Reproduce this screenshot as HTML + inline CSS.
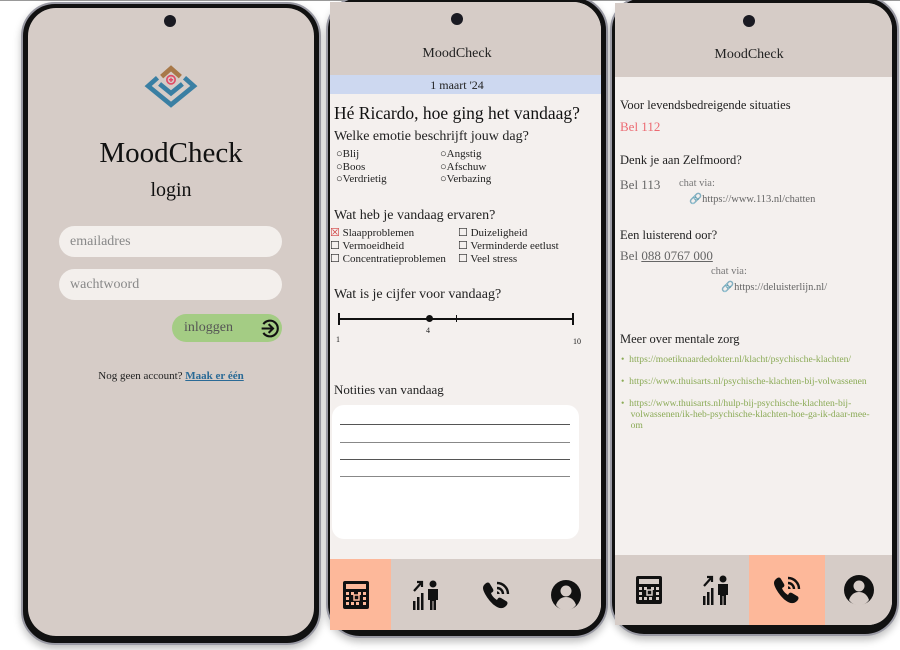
<!DOCTYPE html>
<html><head><meta charset="utf-8"><style>
*{margin:0;padding:0;box-sizing:border-box}
body{width:900px;height:650px;background:#fff;position:relative;overflow:hidden;font-family:"Liberation Serif",serif;color:#222}
.a{position:absolute}
.phone{position:absolute;background:#111;border:2px solid #9a9aa4;box-shadow:0 4px 8px rgba(0,0,0,.25)}
.scr{position:absolute;overflow:hidden}
.cam{position:absolute;width:12px;height:12px;border-radius:50%;background:#1a1a22}
.t{position:absolute;white-space:nowrap}
.nav{position:absolute;left:0;right:0;background:#d6ccc7;display:flex}
.nav div{flex:1;display:flex;align-items:center;justify-content:center}
.nav .on{background:#fdb89a}
.green{color:#8aaa55}
</style></head><body>
<div class="a" style="left:0;top:0;width:900px;height:1px;background:#999"></div>

<!-- Phone 1 -->
<div class="phone" style="left:21px;top:2px;width:300px;height:643px;border-radius:34px"></div>
<div class="scr" style="left:28px;top:8px;width:286px;height:628px;border-radius:28px;background:#d6ccc7">
  <div class="cam" style="left:136px;top:7px"></div>
  <svg class="a" style="left:116px;top:56px" width="54" height="44" viewBox="0 0 52 42">
    <path d="M17 12 L26 4 L35 12" fill="none" stroke="#a87848" stroke-width="4.5"/>
    <path d="M13 13 L4 21 L26 39 L48 21 L39 13" fill="none" stroke="#3a7fa3" stroke-width="4.5"/>
    <path d="M15 19 L26 28 L37 19" fill="none" stroke="#3a7fa3" stroke-width="4.5"/>
    <circle cx="26" cy="15" r="4" fill="none" stroke="#e04b66" stroke-width="1.6"/>
    <path d="M24 15h4M26 13v4" stroke="#e04b66" stroke-width="1.4"/>
  </svg>
  <div class="t" style="left:0;width:286px;text-align:center;top:129px;font-size:29px;color:#111">MoodCheck</div>
  <div class="t" style="left:0;width:286px;text-align:center;top:171px;font-size:20px;color:#111">login</div>
  <div class="a" style="left:31px;top:218px;width:223px;height:31px;border-radius:16px;background:#f3efec"></div>
  <div class="t" style="left:42px;top:226px;font-size:14px;color:#888">emailadres</div>
  <div class="a" style="left:31px;top:261px;width:223px;height:31px;border-radius:16px;background:#f3efec"></div>
  <div class="t" style="left:42px;top:269px;font-size:14px;color:#888">wachtwoord</div>
  <div class="a" style="left:144px;top:306px;width:110px;height:28px;border-radius:14px;background:#a4cc84"></div>
  <div class="t" style="left:156px;top:312px;font-size:14px;color:#555">inloggen</div>
  <svg class="a" style="left:231px;top:310px" width="21" height="21" viewBox="0 0 24 24"><path d="M5 7A9 9 0 1 1 5 17" fill="none" stroke="#111" stroke-width="2.4"/><path d="M3 12h12M11 7l5 5-5 5" fill="none" stroke="#111" stroke-width="2.4"/></svg>
  <div class="t" style="left:0;width:286px;text-align:center;top:362px;font-size:11px;color:#222">Nog geen account? <span style="color:#2a6a96;text-decoration:underline;font-weight:bold">Maak er één</span></div>
</div>

<!-- Phone 2 -->
<div class="phone" style="left:326px;top:-4px;width:282px;height:642px;border-radius:34px"></div>
<div class="scr" style="left:330px;top:2px;width:271px;height:628px;border-radius:0 28px 26px 0;background:#f4f0ee">
  <div class="a" style="left:0;top:0;width:271px;height:73px;background:#d6ccc7"></div>
  <div class="cam" style="left:121px;top:11px"></div>
  <div class="t" style="left:0;width:254px;text-align:center;top:44px;font-size:14px;color:#222">MoodCheck</div>
  <div class="a" style="left:0;top:73px;width:271px;height:19px;background:#cdd8f0"></div>
  <div class="t" style="left:0;width:254px;text-align:center;top:76px;font-size:12px">1 maart '24</div>
  <div class="t" style="left:4px;top:101px;font-size:17.5px;color:#111">Hé Ricardo, hoe ging het vandaag?</div>
  <div class="t" style="left:4px;top:127px;font-size:14px">Welke emotie beschrijft jouw dag?</div>
  <div class="t" style="left:6px;top:146px;font-size:11px;line-height:12.5px">○Blij<br>○Boos<br>○Verdrietig</div>
  <div class="t" style="left:110px;top:146px;font-size:11px;line-height:12.5px">○Angstig<br>○Afschuw<br>○Verbazing</div>
  <div class="t" style="left:4px;top:206px;font-size:14px">Wat heb je vandaag ervaren?</div>
  <div class="t" style="left:0;top:225px;font-size:11px;line-height:13px"><span style="color:#d04040">☒</span> Slaapproblemen<br>☐ Vermoeidheid<br>☐ Concentratieproblemen</div>
  <div class="t" style="left:128px;top:225px;font-size:11px;line-height:13px">☐ Duizeligheid<br>☐ Verminderde eetlust<br>☐ Veel stress</div>
  <div class="t" style="left:4px;top:285px;font-size:14px">Wat is je cijfer voor vandaag?</div>
  <div class="a" style="left:8px;top:316px;width:236px;height:1.5px;background:#111"></div>
  <div class="a" style="left:8px;top:311px;width:2px;height:12px;background:#111"></div>
  <div class="a" style="left:242px;top:311px;width:2px;height:12px;background:#111"></div>
  <div class="a" style="left:126px;top:313px;width:1px;height:7px;background:#111"></div>
  <div class="a" style="left:96px;top:313px;width:7px;height:7px;border-radius:50%;background:#111"></div>
  <div class="t" style="left:6px;top:333px;font-size:8px">1</div>
  <div class="t" style="left:96px;top:324px;font-size:8px">4</div>
  <div class="t" style="left:243px;top:335px;font-size:8px">10</div>
  <div class="t" style="left:4px;top:380px;font-size:13px">Notities van vandaag</div>
  <div class="a" style="left:2px;top:403px;width:247px;height:134px;border-radius:12px;background:#fff"></div>
  <div class="a" style="left:10px;top:422px;width:230px;height:1px;background:#555"></div>
  <div class="a" style="left:10px;top:440px;width:230px;height:1px;background:#888"></div>
  <div class="a" style="left:10px;top:457px;width:230px;height:1px;background:#555"></div>
  <div class="a" style="left:10px;top:474px;width:230px;height:1px;background:#888"></div>
  <div class="nav" style="top:557px;height:71px">
    <div class="on" style="flex:0 0 61px;padding-right:10px">CAL</div><div>STAT</div><div>TEL</div><div>USR</div>
  </div>
</div>

<!-- Phone 3 -->
<div class="phone" style="left:610px;top:-4px;width:289px;height:640px;border-radius:34px"></div>
<div class="scr" style="left:615px;top:3px;width:277px;height:622px;border-radius:0 26px 24px 0;background:#f4f0ee">
  <div class="a" style="left:0;top:0;width:277px;height:74px;background:#d6ccc7"></div>
  <div class="cam" style="left:128px;top:12px"></div>
  <div class="t" style="left:0;width:268px;text-align:center;top:44px;font-size:14px">MoodCheck</div>
  <div class="t" style="left:5px;top:95px;font-size:12.5px">Voor levendsbedreigende situaties</div>
  <div class="t" style="left:5px;top:116px;font-size:13px;color:#ec6b73">Bel 112</div>
  <div class="t" style="left:5px;top:150px;font-size:12.5px">Denk je aan Zelfmoord?</div>
  <div class="t" style="left:5px;top:174px;font-size:13px;color:#666">Bel 113</div>
  <div class="t" style="left:64px;top:175px;font-size:10.5px;color:#777">chat via:</div>
  <div class="t" style="left:74px;top:189px;font-size:10.5px;color:#666">🔗https://www.113.nl/chatten</div>
  <div class="t" style="left:5px;top:225px;font-size:12.5px">Een luisterend oor?</div>
  <div class="t" style="left:5px;top:245px;font-size:13px;color:#666">Bel <u>088 0767 000</u></div>
  <div class="t" style="left:96px;top:263px;font-size:10.5px;color:#777">chat via:</div>
  <div class="t" style="left:106px;top:277px;font-size:10.5px;color:#666">🔗https://deluisterlijn.nl/</div>
  <div class="t" style="left:5px;top:329px;font-size:12.5px">Meer over mentale zorg</div>
  <div class="t green" style="left:6px;top:351px;font-size:9.6px">•&nbsp;&nbsp;https://moetiknaardedokter.nl/klacht/psychische-klachten/</div>
  <div class="t green" style="left:6px;top:373px;font-size:9.6px">•&nbsp;&nbsp;https://www.thuisarts.nl/psychische-klachten-bij-volwassenen</div>
  <div class="t green" style="left:6px;top:395px;font-size:9.6px;line-height:11px">•&nbsp;&nbsp;https://www.thuisarts.nl/hulp-bij-psychische-klachten-bij-<br>&nbsp;&nbsp;&nbsp;&nbsp;volwassenen/ik-heb-psychische-klachten-hoe-ga-ik-daar-mee-<br>&nbsp;&nbsp;&nbsp;&nbsp;om</div>
  <div class="nav" style="top:552px;height:70px">
    <div>CAL</div><div>STAT</div><div class="on" style="flex:0 0 76px">TEL</div><div>USR</div>
  </div>
</div>

<script>
const icons={
CAL:'<svg width="26" height="28" viewBox="0 0 26 28"><rect x="0" y="0" width="26" height="28" rx="2" fill="#111"/><rect x="3" y="3" width="20" height="5" fill="#d6ccc7"/><g fill="#d6ccc7"><rect x="3" y="11" width="3" height="3"/><rect x="8" y="11" width="3" height="3"/><rect x="15" y="11" width="3" height="3"/><rect x="20" y="11" width="3" height="3"/><rect x="3" y="16" width="3" height="3"/><rect x="20" y="16" width="3" height="3"/><rect x="3" y="21" width="3" height="3"/><rect x="8" y="21" width="3" height="3"/><rect x="13" y="21" width="3" height="3"/><rect x="20" y="21" width="3" height="3"/><rect x="11" y="14" width="5" height="5" fill="none" stroke="#d6ccc7" stroke-width="1.5"/></g></svg>',
STAT:'<svg width="28" height="32" viewBox="0 0 28 32"><path d="M2 12L10 3M5 3h5v5" fill="none" stroke="#111" stroke-width="2.2"/><g fill="#111"><rect x="1" y="22" width="2.5" height="9"/><rect x="5" y="18" width="2.5" height="13"/><rect x="9" y="14" width="2.5" height="17"/><circle cx="21" cy="5" r="3.5"/><path d="M16 10h10v11h-2v10h-2.5v-9h-1v9H18V21h-2z"/></g></svg>',
TEL:'<svg width="30" height="30" viewBox="0 0 30 30"><path d="M4 4c2-2 4-2 5 0l3 5c1 2 0 3-2 4 1 3 3 5 6 7 1-2 2-3 4-2l5 3c2 1 2 3 0 5-3 3-7 3-12-1S2 12 2 8c0-2 1-3 2-4z" fill="#111"/><path d="M16 3a11 11 0 0 1 11 11M16 8a6 6 0 0 1 6 6M16 12.5a1.5 1.5 0 0 1 1.5 1.5" fill="none" stroke="#111" stroke-width="2.4"/></svg>',
USR:'<svg width="30" height="30" viewBox="0 0 30 30"><circle cx="15" cy="15" r="15" fill="#111"/><circle cx="15" cy="11" r="5.5" fill="#d6ccc7"/><path d="M5 25c2-6 6-8 10-8s8 2 10 8a12 12 0 0 1-20 0z" fill="#d6ccc7"/></svg>'};
document.querySelectorAll('.nav div').forEach(d=>{const k=d.textContent.trim();let s=icons[k];if(d.classList.contains('on'))s=s.replace(/#d6ccc7/g,'#fdb89a');d.innerHTML=s;});
</script>
</body></html>
